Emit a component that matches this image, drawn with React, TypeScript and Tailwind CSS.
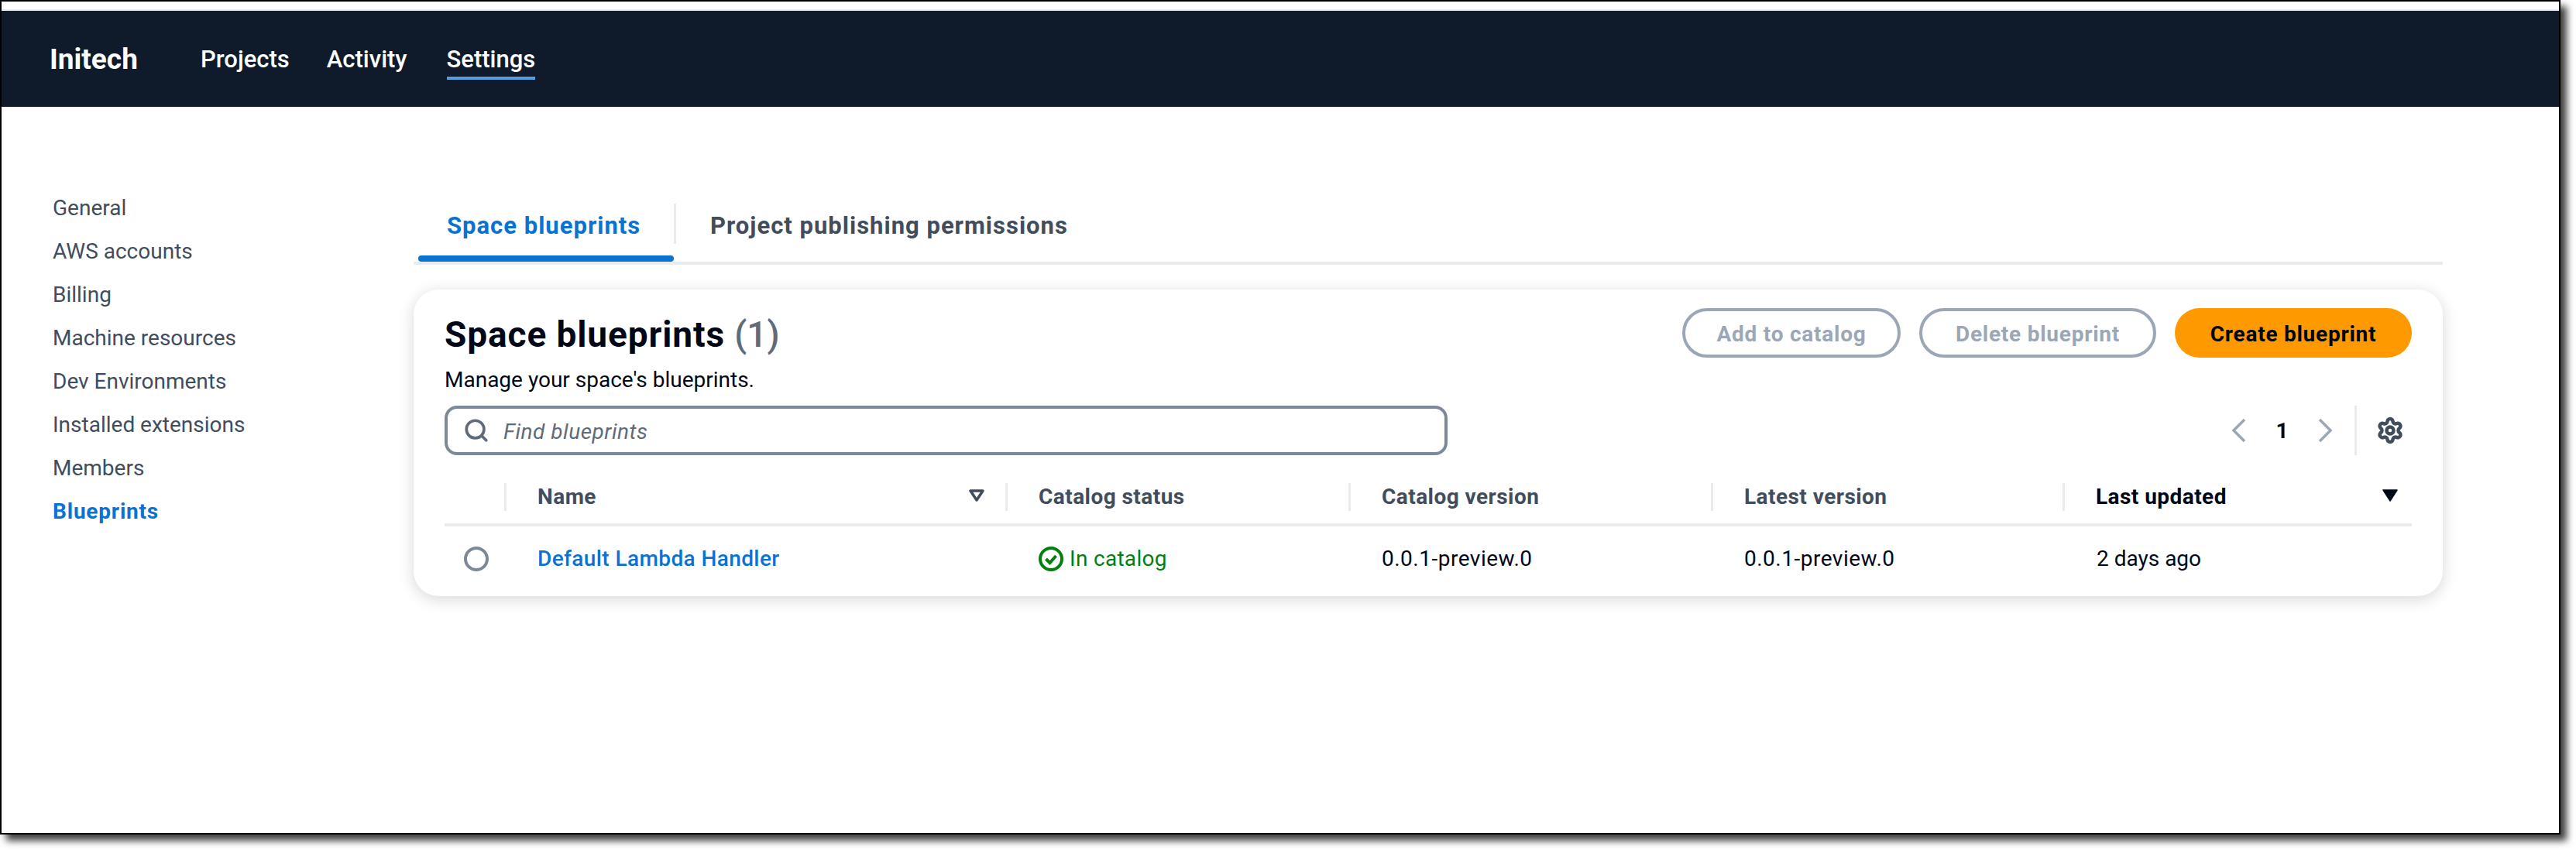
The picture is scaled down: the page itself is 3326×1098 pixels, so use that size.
import { Search, Settings } from "lucide-react";

const sideLinks = ["General", "AWS accounts", "Billing", "Machine resources", "Dev Environments", "Installed extensions", "Members"];

const SortIcon = () => (
  <svg viewBox="0 0 22 16" className="w-[22px] h-[16px] -mt-[4px] text-[#414d5c]">
    <path d="M3 2h16l-8 12z" fill="none" stroke="currentColor" strokeWidth="3.5" strokeLinejoin="round" />
  </svg>
);

const SortedIcon = () => (
  <svg viewBox="0 0 22 16" className="w-[22px] h-[16px] -mt-[4px] text-[#000716]">
    <path d="M2 1h18l-9 14z" fill="currentColor" stroke="currentColor" strokeWidth="1.5" strokeLinejoin="round" />
  </svg>
);

const Chevron = ({ flip }: { flip?: boolean }) => (
  <svg viewBox="0 0 18 32" className="w-[18px] h-[32px] text-[#9ba7b6]">
    <path d={flip ? "M2 2l14 14L2 30" : "M16 2L2 16l14 14"} fill="none" stroke="currentColor" strokeWidth="3.5" />
  </svg>
);

const CheckCircle = () => (
  <svg viewBox="0 0 32 32" className="w-[32px] h-[32px] shrink-0">
    <circle cx="16" cy="16" r="14" fill="none" stroke="#037f0c" strokeWidth="4" />
    <path d="M9.5 16l5 5 8-9" fill="none" stroke="#037f0c" strokeWidth="4" />
  </svg>
);

const HeadCell = ({ label, active, pr, children }: { label: string; active?: boolean; pr?: string; children?: React.ReactNode }) => (
  <div className={`flex items-center justify-between h-[36px] border-l-[3px] border-[#e9ebed] pl-[40px] ${pr ?? "pr-[16px]"}`}>
    <span className={`font-bold tracking-[0.45px] ${active ? "text-[#000716]" : "text-[#414d5c]"}`}>{label}</span>
    {children}
  </div>
);

export default function App() {
  return (
    <div className="w-[3326px] h-[1098px] bg-white font-['Roboto',sans-serif] text-[28px] leading-[40px] overflow-hidden">
      <div className="w-[3306px] h-[1078px] border-2 border-black bg-white shadow-[8px_8px_9px_rgba(0,0,0,0.75)]">
        <div className="h-[10px]" />
        <div className="h-[2px] bg-[#e9ebed]" />
        <header className="h-[124px] bg-[#0f1b2a] flex items-center pl-[62px] text-white">
          <span className="w-[195px] pt-[2px] text-[37px] font-bold">Initech</span>
          <nav className="flex gap-[48px] pt-[2px] text-[31px] font-medium">
            <span>Projects</span>
            <span className="mr-[3px]">Activity</span>
            <span className="relative">
              Settings
              <span className="absolute left-0 right-0 top-[42px] h-[4px] bg-[#539fe5]" />
            </span>
          </nav>
        </header>
        <div className="flex pt-[102px]">
          <aside className="w-[532px] pt-[1px] pl-[66px] text-[#414d5c] flex flex-col">
            {sideLinks.map((l) => (
              <a key={l} className="h-[56px] leading-[56px]">{l}</a>
            ))}
            <a className="h-[56px] leading-[56px] font-bold tracking-[0.8px] text-[#0972d3]">Blueprints</a>
          </aside>
          <main className="w-[2620px]">
            <div className="flex h-[102px] border-b-4 border-[#e9ebed] text-[31px] font-bold tracking-[1px]">
              <div className="relative ml-[6px] w-[330px] flex items-center pl-[37px] pt-[6px] text-[#0972d3]">
                Space blueprints
                <span className="absolute left-0 right-0 bottom-0 h-[8px] rounded-full bg-[#0972d3]" />
              </div>
              <div className="flex items-center h-[98px]">
                <span className="w-[3px] h-[52px] bg-[#e9ebed]" />
                <span className="pl-[44px] pt-[6px] text-[#414d5c]">Project publishing permissions</span>
              </div>
            </div>
            <section className="mt-[32px] w-[2620px] h-[396px] rounded-[32px] bg-white px-[40px] pt-[24px] shadow-[0_4px_20px_rgba(0,7,22,0.16)]">
              <div className="flex justify-between h-[64px]">
                <h2 className="text-[46px] leading-[64px] pt-[2px] font-bold tracking-[0.9px] text-[#000716]">
                  Space blueprints <span className="font-medium tracking-normal text-[#5f6b7a]">(1)</span>
                </h2>
                <div className="flex gap-[24px] font-bold tracking-[0.75px]">
                  <button className="w-[282px] h-[64px] pt-[4px] rounded-full border-4 border-[#9ba7b6] text-[#9ba7b6]">Add to catalog</button>
                  <button className="w-[306px] h-[64px] pt-[4px] rounded-full border-4 border-[#9ba7b6] text-[#9ba7b6]">Delete blueprint</button>
                  <button className="w-[306px] h-[64px] pt-[4px] rounded-full bg-[#ff9900] text-[#000716]">Create blueprint</button>
                </div>
              </div>
              <p className="h-[40px] mt-[9px] text-[#000716]">Manage your space's blueprints.</p>
              <div className="flex items-center justify-between mt-[13px] h-[64px]">
                <div className="w-[1295px] h-[64px] rounded-[16px] border-4 border-[#7d8998] bg-white flex items-center pl-[20px] gap-[18px]">
                  <Search className="w-[34px] h-[34px] text-[#5f6b7a]" strokeWidth={2.6} />
                  <span className="italic pt-[4px] tracking-[0.5px] text-[#5f6b7a]">Find blueprints</span>
                </div>
                <div className="flex items-center">
                  <Chevron />
                  <span className="w-[93px] pt-[2px] text-center font-bold text-[#000716]">1</span>
                  <Chevron flip />
                  <span className="w-[3px] h-[64px] ml-[29px] bg-[#e9ebed]" />
                  <Settings className="w-[36px] h-[36px] ml-[25px] mr-[10px] text-[#414d5c]" strokeWidth={3} />
                </div>
              </div>
              <div className="grid grid-cols-[77px_647px_443px_468px_454px_451px] items-center h-[92px] pt-[20px] border-b-4 border-[#e9ebed]">
                <div />
                <HeadCell label="Name" pr="pr-[26px]"><SortIcon /></HeadCell>
                <HeadCell label="Catalog status" />
                <HeadCell label="Catalog version" />
                <HeadCell label="Latest version" />
                <HeadCell label="Last updated" active pr="pr-[17px]"><SortedIcon /></HeadCell>
              </div>
              <div className="grid grid-cols-[77px_647px_443px_468px_454px_451px] items-center h-[84px] text-[#000716]">
                <div className="pl-[25px]">
                  <div className="w-[32px] h-[32px] rounded-full border-4 border-[#7d8998]" />
                </div>
                <a className="pl-[43px] text-[#0972d3] font-medium tracking-[0.4px]">Default Lambda Handler</a>
                <div className="pl-[43px] flex items-center gap-[8px] tracking-[0.3px] text-[#037f0c]">
                  <CheckCircle />
                  In catalog
                </div>
                <div className="pl-[43px] tracking-[0.5px]">0.0.1-preview.0</div>
                <div className="pl-[43px] tracking-[0.5px]">0.0.1-preview.0</div>
                <div className="pl-[44px]">2 days ago</div>
              </div>
            </section>
          </main>
        </div>
      </div>
    </div>
  );
}
